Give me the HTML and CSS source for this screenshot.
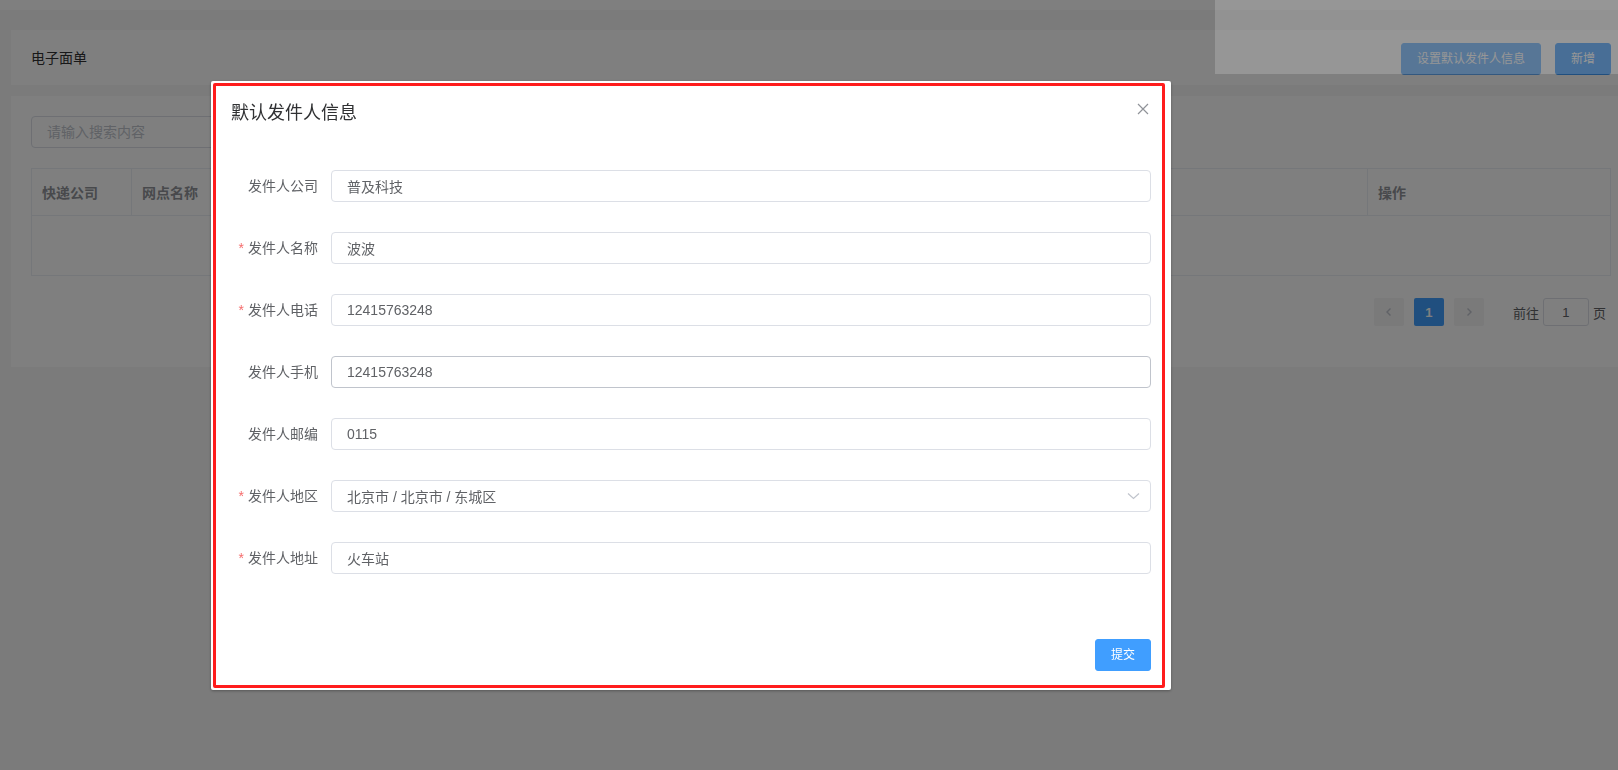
FILE: index.html
```html
<!DOCTYPE html>
<html lang="zh-CN">
<head>
    <meta charset="UTF-8">
    <meta name="viewport" content="width=device-width, initial-scale=1.0">
    <title>电子面单</title>
    <link rel="stylesheet" href="styles.css">
</head>
<body>
    <div class="topbar"></div>

    <div class="main">
        <div class="page-header">
            <span class="page-title">电子面单</span>
            <div class="header-actions">
                <button class="btn btn-light">设置默认发件人信息</button>
                <button class="btn">新增</button>
            </div>
        </div>

        <div class="content-card">
            <input type="text" class="search-input" placeholder="请输入搜索内容">

            <div class="table">
                <div class="table-row table-head">
                    <div class="th">快递公司</div>
                    <div class="th">网点名称</div>
                    <div class="th">网点编码</div>
                    <div class="th">客户账号</div>
                    <div class="th">月结编码</div>
                    <div class="th">操作</div>
                </div>
                <div class="table-empty">暂无数据</div>
            </div>

            <div class="pager">
                <button class="pg-btn">
                    <svg width="12" height="12" viewBox="0 0 12 12"><path d="M7.5 2.5 4 6l3.5 3.5" fill="none" stroke="#c0c4cc" stroke-width="1.4"/></svg>
                </button>
                <button class="pg-btn active">1</button>
                <button class="pg-btn">
                    <svg width="12" height="12" viewBox="0 0 12 12"><path d="M4.5 2.5 8 6l-3.5 3.5" fill="none" stroke="#c0c4cc" stroke-width="1.4"/></svg>
                </button>
                <span class="pg-jump">前往<input type="text" value="1">页</span>
            </div>
        </div>
    </div>

    <!-- modal layer -->
    <div class="modal-mask"></div>
    <div class="glare"></div>

    <div class="dialog-wrap">
        <div class="dialog">
            <div class="dialog-mark"></div>
            <div class="dialog-header">
                <span class="dialog-title">默认发件人信息</span>
                <button class="dialog-close" aria-label="关闭">
                    <svg width="12" height="12" viewBox="0 0 12 12"><path d="M1 1l10 10M11 1 1 11" stroke="#909399" stroke-width="1.2"/></svg>
                </button>
            </div>

            <div class="dialog-body">
                <div class="form-item">
                    <label class="form-label">发件人公司</label>
                    <div class="form-field"><input class="input" type="text" value="普及科技"></div>
                </div>
                <div class="form-item">
                    <label class="form-label"><span class="req">*</span>发件人名称</label>
                    <div class="form-field"><input class="input" type="text" value="波波"></div>
                </div>
                <div class="form-item">
                    <label class="form-label"><span class="req">*</span>发件人电话</label>
                    <div class="form-field"><input class="input" type="text" value="12415763248"></div>
                </div>
                <div class="form-item">
                    <label class="form-label">发件人手机</label>
                    <div class="form-field"><input class="input input-hover" type="text" value="12415763248"></div>
                </div>
                <div class="form-item">
                    <label class="form-label">发件人邮编</label>
                    <div class="form-field"><input class="input" type="text" value="0115"></div>
                </div>
                <div class="form-item">
                    <label class="form-label"><span class="req">*</span>发件人地区</label>
                    <div class="form-field select">
                        <input class="input" type="text" value="北京市 / 北京市 / 东城区" readonly>
                        <svg class="select-arrow" width="13" height="8" viewBox="0 0 13 8"><path d="M1 1.5l5.5 5 5.5-5" fill="none" stroke="#c0c4cc" stroke-width="1.2"/></svg>
                    </div>
                </div>
                <div class="form-item">
                    <label class="form-label"><span class="req">*</span>发件人地址</label>
                    <div class="form-field"><input class="input" type="text" value="火车站"></div>
                </div>
            </div>

            <div class="dialog-footer">
                <button class="btn">提交</button>
            </div>
        </div>
    </div>
</body>
</html>
```

FILE: styles.css
```css
* {
    box-sizing: border-box;
}
html, body {
    margin: 0;
}
body {
    width: 1618px;
    height: 770px;
    overflow: hidden;
    background: #f6f6f6;
    font-family: "Liberation Sans", "Noto Sans CJK SC", sans-serif;
    font-size: 14px;
    color: #606266;
}
button, input {
    font-family: inherit;
}
.topbar {
    height: 10px;
    background: #fff;
}
.main {
    width: 1620px;
    margin-left: 11px;
    padding-top: 20px;
}
.page-header {
    height: 55px;
    background: #fff;
    padding: 0 20px;
    display: flex;
    align-items: center;
    justify-content: space-between;
}
.page-title {
    color: #303133;
    line-height: 20px;
}
.header-actions {
    display: flex;
    gap: 14px;
    margin-top: 3px;
}
.btn {
    height: 32px;
    padding: 0 15px;
    border: 1px solid #409eff;
    border-radius: 3px;
    background: #409eff;
    color: #fff;
    font-size: 12px;
    line-height: 30px;
}
.btn-light {
    background: #66b1ff;
    border-color: #66b1ff;
}
.content-card {
    margin-top: 11px;
    background: #fff;
    padding: 20px 20px 41px;
}
.search-input {
    display: block;
    width: 320px;
    height: 32px;
    padding: 0 15px;
    border: 1px solid #dcdfe6;
    border-radius: 4px;
    font-size: 14px;
    color: #606266;
}
.search-input::placeholder {
    color: #c0c4cc;
}
.table {
    margin-top: 20px;
    border: 1px solid #ebeef5;
}
.table-row {
    display: grid;
    grid-template-columns: 100px 300px 300px 336px 300px 1fr;
}
.table-head {
    height: 47px;
    border-bottom: 1px solid #ebeef5;
}
.th {
    display: flex;
    align-items: center;
    padding: 0 10px;
    border-right: 1px solid #ebeef5;
    font-weight: bold;
    color: #909399;
}
.th:last-child {
    border-right: none;
}
.table-empty {
    height: 59px;
    display: flex;
    align-items: center;
    justify-content: center;
    color: #909399;
}
.pager {
    margin-top: 22px;
    padding: 0 5px;
    display: flex;
    justify-content: flex-end;
    align-items: center;
    height: 28px;
}
.pg-btn {
    width: 30px;
    height: 28px;
    margin: 0 5px;
    padding: 0;
    border: none;
    border-radius: 2px;
    background: #f4f4f5;
    display: flex;
    align-items: center;
    justify-content: center;
    font-size: 13px;
    font-weight: bold;
    color: #606266;
}
.pg-btn.active {
    background: #409eff;
    color: #fff;
}
.pg-jump {
    margin-left: 24px;
    display: flex;
    align-items: center;
    font-size: 13px;
    color: #606266;
}
.pg-jump input {
    width: 46px;
    height: 28px;
    margin: 0 4px;
    border: 1px solid #dcdfe6;
    border-radius: 3px;
    text-align: center;
    font-size: 13px;
    color: #606266;
}

/* modal */
.modal-mask {
    position: fixed;
    inset: 0;
    background: rgba(0, 0, 0, 0.5);
}
.glare {
    position: fixed;
    left: 1215px;
    top: 0;
    width: 403px;
    height: 74px;
    background: rgba(255, 255, 255, 0.18);
}
.dialog-wrap {
    position: fixed;
    inset: 0;
}
.dialog {
    position: relative;
    width: 960px;
    margin: 81px 0 0 211px;
    background: #fff;
    border-radius: 2px;
    box-shadow: 0 1px 3px rgba(0, 0, 0, 0.3);
}
.dialog-mark {
    position: absolute;
    left: 2px;
    top: 2px;
    right: 6px;
    bottom: 2px;
    border: 3px solid #ff1c1c;
    border-radius: 2px;
    pointer-events: none;
}
.dialog-header {
    position: relative;
    padding: 20px 20px 10px;
}
.dialog-title {
    display: block;
    font-size: 18px;
    line-height: 24px;
    color: #303133;
}
.dialog-close {
    position: absolute;
    top: 20px;
    right: 20px;
    width: 16px;
    height: 16px;
    padding: 0;
    border: none;
    background: none;
    display: flex;
    align-items: center;
    justify-content: center;
}
.dialog-body {
    padding: 35px 20px 25px;
}
.form-item {
    display: flex;
    margin-bottom: 30px;
}
.form-label {
    width: 100px;
    flex-shrink: 0;
    padding-right: 13px;
    line-height: 32px;
    text-align: right;
    color: #606266;
}
.req {
    color: #f56c6c;
    margin-right: 4px;
}
.form-field {
    flex: 1;
    position: relative;
}
.input {
    display: block;
    width: 100%;
    height: 32px;
    padding: 0 15px;
    border: 1px solid #dcdfe6;
    border-radius: 4px;
    font-size: 14px;
    color: #606266;
    background: #fff;
}
.input-hover {
    border-color: #c0c4cc;
}
.select .input {
    padding-right: 30px;
}
.select-arrow {
    position: absolute;
    right: 11px;
    top: 12px;
}
.dialog-footer {
    padding: 10px 20px 19px;
    text-align: right;
}
```
